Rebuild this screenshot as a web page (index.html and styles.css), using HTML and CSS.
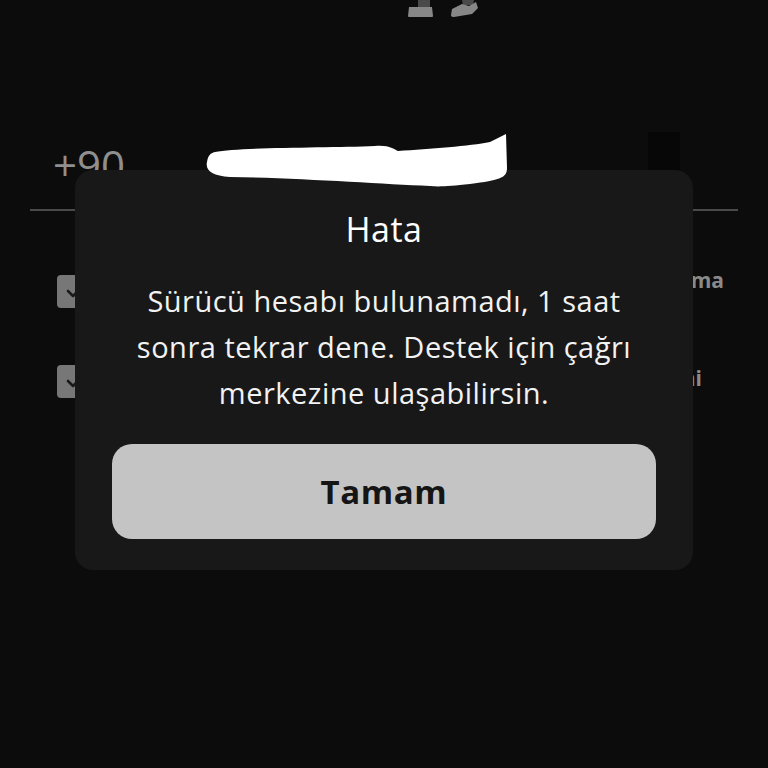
FILE: index.html
```html
<!DOCTYPE html>
<html lang="tr">
<head>
<meta charset="utf-8">
<title>Hata</title>
<link rel="stylesheet" href="styles.css">
</head>
<body>
<div class="screen">
  <div class="hero">
    <svg class="boots" width="80" height="20" viewBox="404 0 80 20">
      <path d="M418 0 H430 V8 H418 Z" fill="#4a4a4a"/>
      <path d="M409 7 H432 L433 16 Q433 17 432 17 H409 Q408 17 408 16 Z" fill="#878787"/>
      <path d="M462 0 H474 L473 5 H463 Z" fill="#4a4a4a"/>
      <path d="M452 9 L462 4 L469 6 L476 2 L478 8 L472 14 L454 17 Q451 17 451 15 Z" fill="#878787"/>
    </svg>
  </div>
  <div class="phone-row">
    <span class="cc">+90</span>
    <span class="phone-clear"></span>
  </div>
  <div class="divider"></div>
  <div class="consents">
    <div class="consent">
      <span class="check"><svg width="18" height="14" viewBox="0 0 18 14"><path d="M3 6 L8 11 L16 3" fill="none" stroke="#1a1a1a" stroke-width="2.6" stroke-linecap="round" stroke-linejoin="round"/></svg></span>
      <span class="label label-1">Onaylama</span>
    </div>
    <div class="consent">
      <span class="check"><svg width="18" height="14" viewBox="0 0 18 14"><path d="M3 6 L8 11 L16 3" fill="none" stroke="#1a1a1a" stroke-width="2.6" stroke-linecap="round" stroke-linejoin="round"/></svg></span>
      <span class="label label-2">Metni</span>
    </div>
  </div>
</div>

<div class="overlay">
  <div class="dialog">
    <h2 class="dialog-title">Hata</h2>
    <p class="dialog-text">Sürücü hesabı bulunamadı, 1 saat<br>sonra tekrar dene. Destek için çağrı<br>merkezine ulaşabilirsin.</p>
    <button class="dialog-btn" type="button">Tamam</button>
  </div>
</div>

<svg class="scribble" width="768" height="200" viewBox="0 0 768 200">
  <path d="M215 152 C240 147 330 148 375 146 C390 145 393 149 398 151 C430 149 470 146 490 142 L506 134 L507 168 C507 178 500 180 470 184 C450 186 440 187 430 186 C380 184 300 178 230 177 C212 176 205 170 207 162 C208 156 210 153 215 152 Z" fill="#ffffff"/>
</svg>
</body>
</html>
```

FILE: styles.css
```css
html, body {
  margin: 0;
  padding: 0;
  background: #0c0c0c;
  width: 768px;
  height: 768px;
  overflow: hidden;
  font-family: "Open Sans", "Lato", sans-serif;
}

.screen {
  display: flex;
  flex-direction: column;
}

.hero {
  height: 130px;
  display: flex;
  justify-content: flex-start;
}

.boots {
  display: block;
  margin-left: 404px;
}

.phone-row {
  display: flex;
  align-items: flex-start;
  justify-content: space-between;
  padding: 0 88px 0 53px;
  height: 79px;
}

.cc {
  font-size: 42px;
  color: #8f8f8f;
  line-height: 1;
  margin-top: 14px;
  font-weight: 400;
}

.phone-clear {
  width: 32px;
  height: 40px;
  margin-top: 2px;
  background: #070707;
}

.divider {
  margin: 0 30px;
  height: 2px;
  background: #4a4a4a;
}

.consents {
  display: flex;
  flex-direction: column;
  gap: 57px;
  padding: 64px 0 0 57px;
}

.consent {
  display: flex;
  align-items: center;
  height: 33px;
}

.check {
  width: 33px;
  height: 33px;
  border-radius: 4px;
  background: #777777;
  display: flex;
  align-items: center;
  justify-content: center;
  flex: none;
}

.label {
  flex: 1;
  text-align: right;
  font-size: 21px;
  font-weight: 700;
  color: #8a8a8a;
  white-space: nowrap;
  overflow: hidden;
}

.label-1 {
  margin-right: 44px;
  margin-top: -24px;
}

.label-2 {
  margin-right: 66px;
  margin-top: -8px;
}

.overlay {
  position: absolute;
  left: 0;
  top: 0;
  width: 768px;
  height: 768px;
  display: flex;
  justify-content: center;
  align-items: flex-start;
  padding-top: 170px;
  box-sizing: border-box;
}

.dialog {
  width: 618px;
  height: 400px;
  box-sizing: border-box;
  background: #181818;
  border-radius: 18px;
  padding: 40px 10px 30px;
  display: flex;
  flex-direction: column;
  align-items: center;
}

.dialog-title {
  margin: 0;
  font-size: 34px;
  line-height: 38px;
  font-weight: 500;
  letter-spacing: 0.5px;
  color: #ffffff;
}

.dialog-text {
  margin: 30px 0 0;
  font-size: 29px;
  line-height: 46px;
  font-weight: 500;
  letter-spacing: 0.5px;
  color: #f2f2f2;
  text-align: center;
}

.dialog-btn {
  margin-top: 28px;
  width: 544px;
  height: 95px;
  border: none;
  border-radius: 20px;
  background: #c4c4c4;
  color: #151515;
  font-family: inherit;
  font-size: 33px;
  font-weight: 700;
  letter-spacing: 0.6px;
  cursor: pointer;
}

.scribble {
  position: absolute;
  left: 0;
  top: 0;
}
```
